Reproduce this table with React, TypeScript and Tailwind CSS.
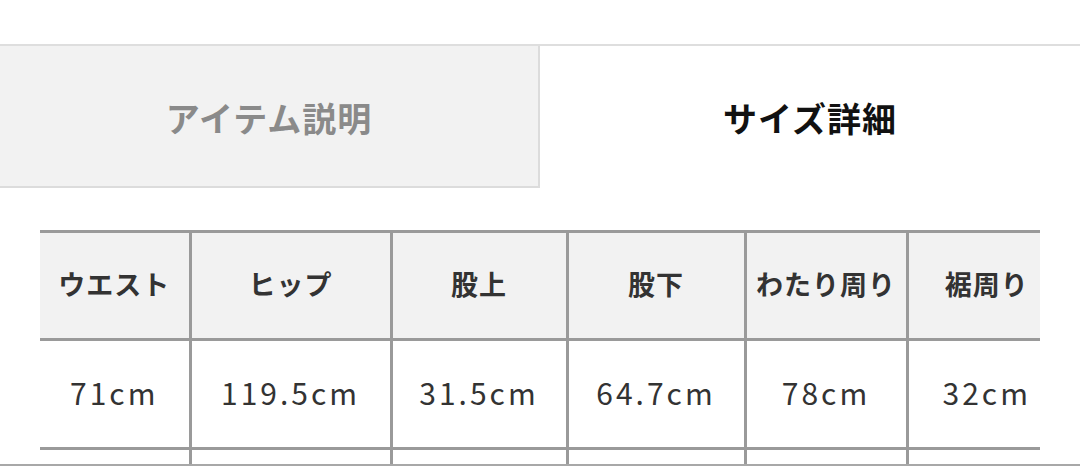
const columns = [
  { label: "ウエスト", value: "71cm", width: "w-[150px]" },
  { label: "ヒップ", value: "119.5cm", width: "w-[201px]" },
  { label: "股上", value: "31.5cm", width: "w-[176px]" },
  { label: "股下", value: "64.7cm", width: "w-[178px]" },
  { label: "わたり周り", value: "78cm", width: "w-[162px]" },
  { label: "裾周り", value: "32cm", width: "w-[158px]" },
];

export default function App() {
  return (
    <div
      className="w-[1080px] h-[466px] bg-white overflow-hidden relative"
      style={{ fontFamily: '"Noto Sans CJK JP", "Noto Sans", sans-serif' }}
    >
      <div className="h-[44px]" />
      {/* tabs */}
      <div className="flex border-t-2 border-[#dedede] h-[144px]">
        <div className="w-[540px] bg-[#f2f2f2] border-r-2 border-b-2 border-[#dcdcdc] flex items-center justify-center pt-[3px]">
          <span className="text-[34px] font-bold text-[#8a8a8a] tracking-[1px] leading-none">
            アイテム説明
          </span>
        </div>
        <div className="flex-1 flex items-center justify-center pt-[2px]">
          <span className="text-[34px] font-bold text-[#111] tracking-[1px] leading-none">
            サイズ詳細
          </span>
        </div>
      </div>

      {/* size table */}
      <div className="ml-[40px] mt-[42px] w-[1000px] overflow-hidden">
        <table className="table-fixed border-collapse w-[1025px] text-[#333]">
          <thead>
            <tr className="bg-[#f2f2f2] h-[108px]">
              {columns.map((c, i) => (
                <th
                  key={c.label}
                  className={`${c.width} border-t-[3px] border-b-[3px] border-[#9a9a9a] ${
                    i > 0 ? "border-l-[3px]" : ""
                  } text-[27px] font-bold tracking-[1px] whitespace-nowrap p-0 pb-[3px]`}
                >
                  {c.label}
                </th>
              ))}
            </tr>
          </thead>
          <tbody>
            <tr className="h-[109px]">
              {columns.map((c, i) => (
                <td
                  key={c.label}
                  className={`border-b-[3px] border-[#9a9a9a] ${
                    i > 0 ? "border-l-[3px]" : ""
                  } text-center text-[30px] tracking-[3px] whitespace-nowrap p-0 pb-[4px]`}
                >
                  {c.value}
                </td>
              ))}
            </tr>
            <tr className="h-[40px]">
              {columns.map((c, i) => (
                <td
                  key={c.label}
                  className={`border-[#9a9a9a] ${i > 0 ? "border-l-[3px]" : ""} p-0`}
                />
              ))}
            </tr>
          </tbody>
        </table>
      </div>
      <div className="absolute left-0 bottom-0 w-full h-[2px] bg-[#a8a8a8]" />
    </div>
  );
}
